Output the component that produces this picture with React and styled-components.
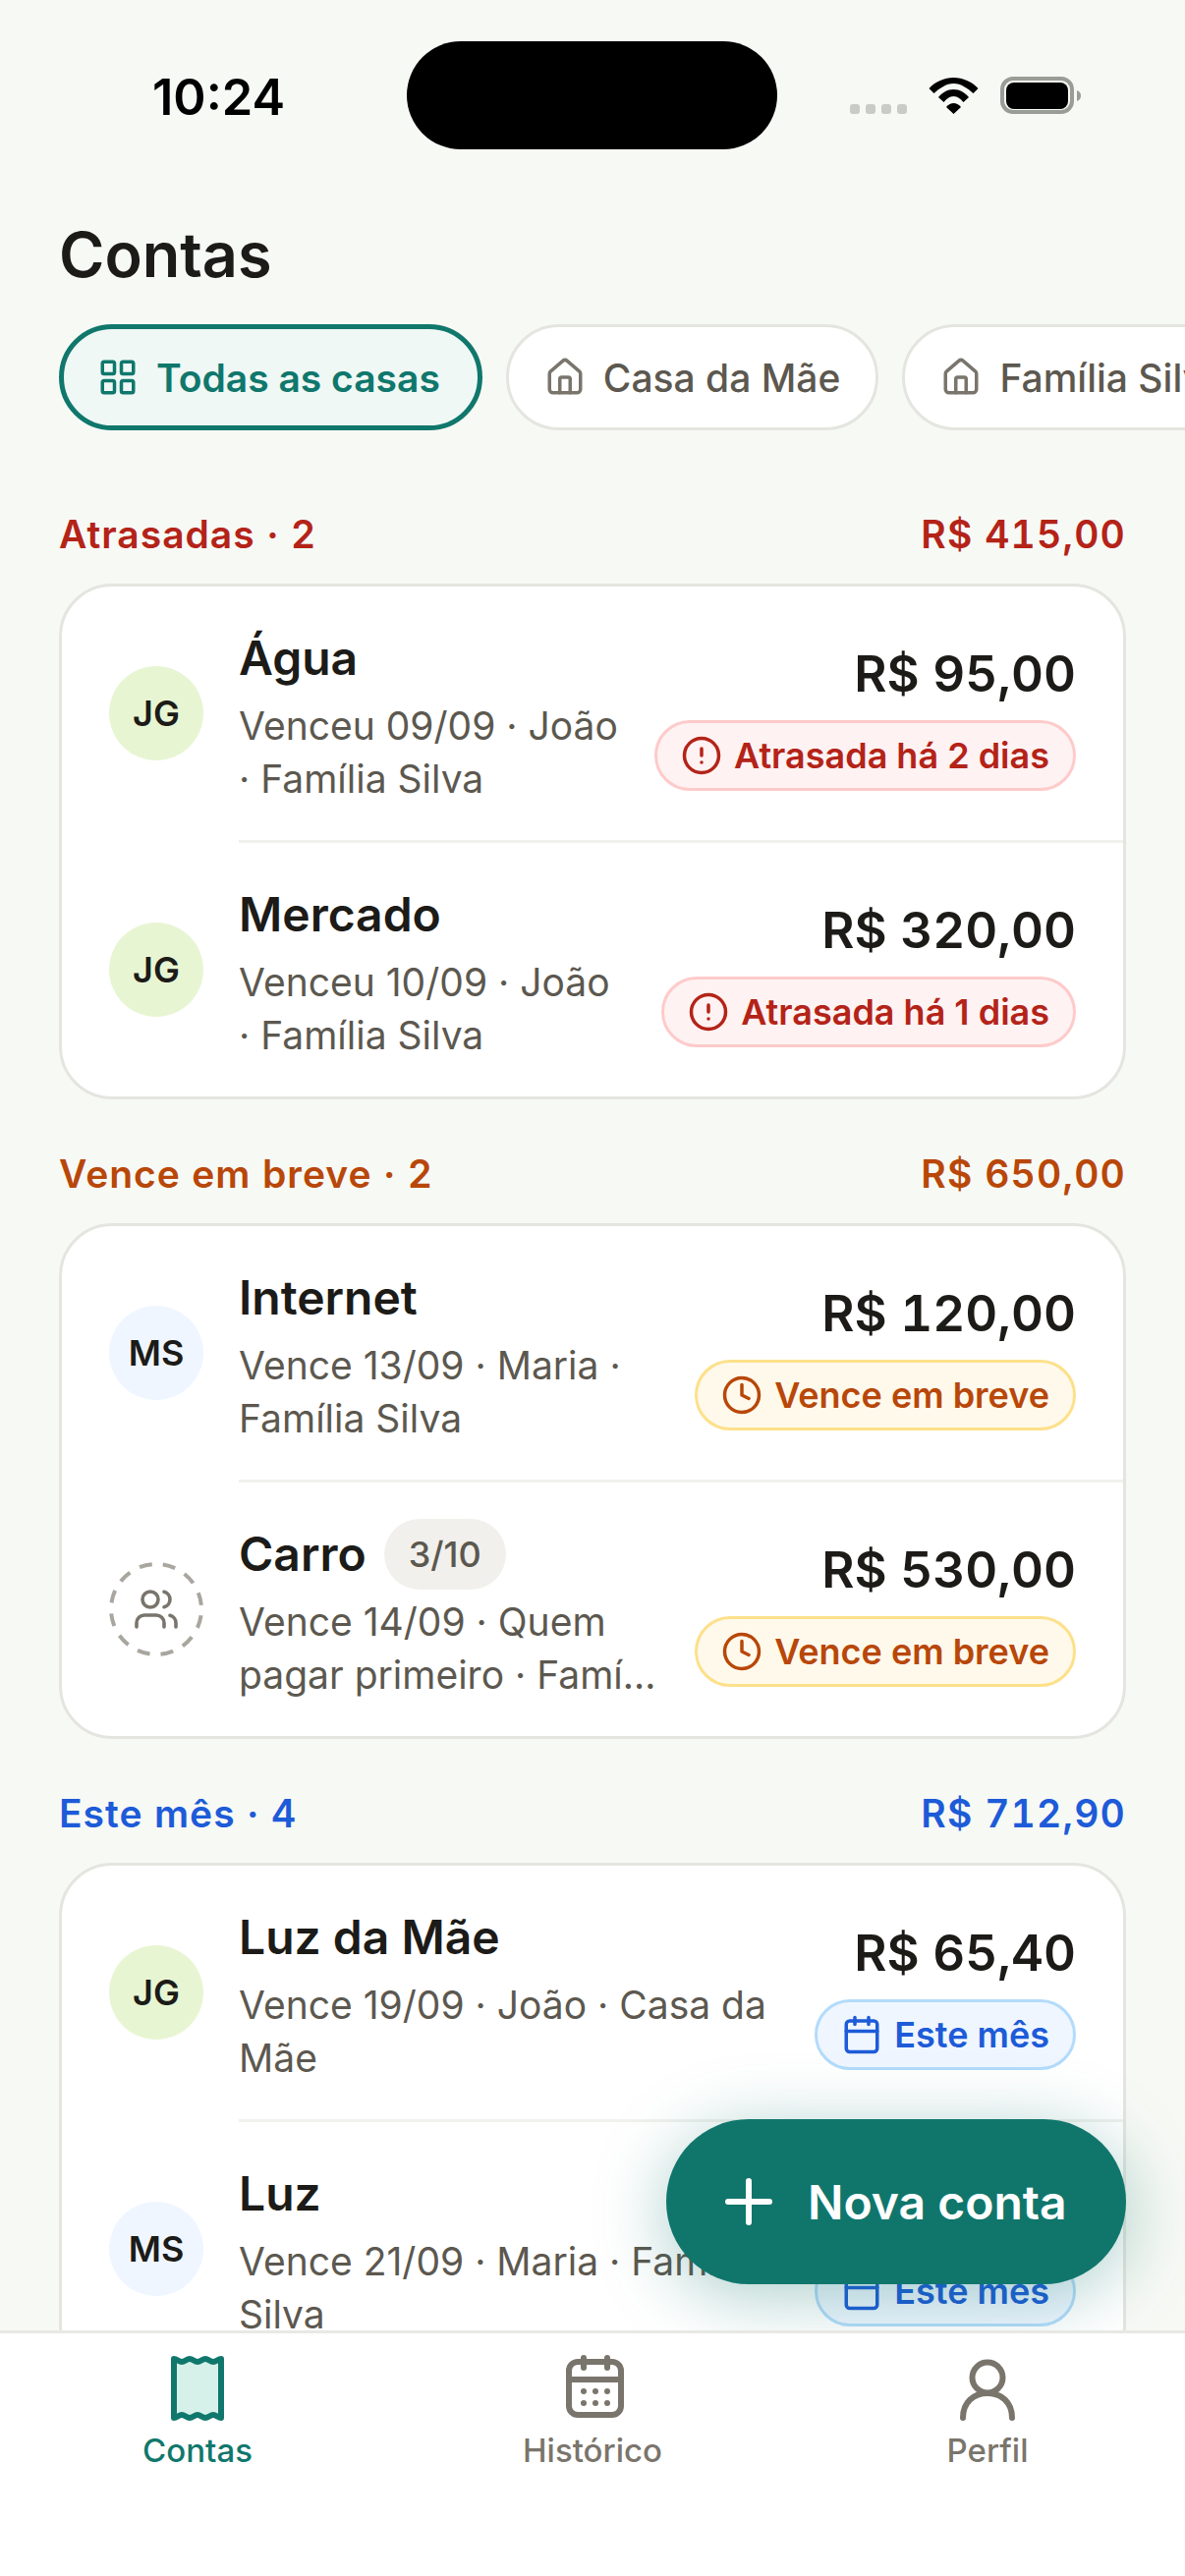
import React from "react";
import styled, { createGlobalStyle } from "styled-components";
import { LayoutGrid, House, CircleAlert, Clock, Calendar, Users, Plus } from "lucide-react";

const GlobalStyle = createGlobalStyle`
  * { box-sizing: border-box; }
  html, body { margin: 0; padding: 0; background: #f7f9f5; }
  body { font-family: "Inter", "Liberation Sans", sans-serif; }
`;

const tones = {
  late: { text: "#b42318", bg: "#fef2f2", border: "#fecaca" },
  soon: { text: "#b84709", bg: "#fff9eb", border: "#fde08a" },
  month: { text: "#1d5bd8", bg: "#eff6ff", border: "#b3dbfb" },
};

const Phone = styled.div`
  position: relative;
  width: 1206px;
  height: 2622px;
  display: flex;
  flex-direction: column;
  overflow: hidden;
  background: #f7f9f5;
`;

const StatusBar = styled.div`
  height: 223px;
  flex: none;
  display: flex;
  align-items: flex-start;
  padding: 42px 0 0 155px;
`;

const Time = styled.div`
  width: 259px;
  padding-top: 27px;
  font-size: 50.5px;
  line-height: 60px;
  font-weight: 600;
  color: #000;
`;

const Island = styled.div`
  width: 377px;
  height: 110px;
  border-radius: 55px;
  background: #000;
`;

const StatusIcons = styled.svg`
  margin-left: 69px;
  margin-top: 28px;
`;

const Title = styled.h1`
  margin: 0;
  padding: 0 60px;
  font-size: 63px;
  line-height: 72px;
  font-weight: 600;
  color: #1c1b18;
`;

const Chips = styled.div`
  display: flex;
  gap: 24px;
  padding: 35px 0 0 60px;
  overflow: hidden;
  flex: none;
`;

const Chip = styled.div`
  flex: none;
  height: 108px;
  display: flex;
  align-items: center;
  gap: 18px;
  padding: ${(p) => (p.$active ? "0 38px 0 34px" : "0 36px")};
  border-radius: 54px;
  border: ${(p) => (p.$active ? "5px solid #10776c" : "3px solid #e5e5e0")};
  background: ${(p) => (p.$active ? "#eff8f5" : "#fff")};
  color: ${(p) => (p.$active ? "#10776c" : "#5c584f")};
  font-size: 39px;
  font-weight: ${(p) => (p.$active ? 600 : 500)};
  white-space: nowrap;

  svg {
    color: ${(p) => (p.$active ? "#10776c" : "#7a756c")};
  }
`;

const List = styled.div`
  flex: 1;
  min-height: 0;
  overflow: hidden;
  padding: 81px 60px 0;
`;

const Section = styled.section`
  margin-bottom: 51px;
`;

const SectionHead = styled.div`
  display: flex;
  justify-content: space-between;
  align-items: center;
  height: 48px;
  margin-bottom: 27px;
  font-size: 39px;
  font-weight: 600;
  letter-spacing: 1px;
  font-variant-numeric: tabular-nums;
  color: ${(p) => tones[p.$tone].text};
`;

const SectionTotal = styled.span`
  letter-spacing: 1.2px;
`;

const Card = styled.div`
  background: #fff;
  border: 3px solid #e5e5e0;
  border-radius: 54px;
  overflow: hidden;
`;

const Row = styled.div`
  position: relative;
  height: 258px;
  display: flex;
  align-items: center;
  padding: 0 48px;
  gap: 36px;
  &:not(:last-child) {
    height: 261px;
    padding-bottom: 3px;
  }
  &:not(:last-child)::after {
    content: "";
    position: absolute;
    left: 180px;
    right: 0;
    bottom: 0;
    height: 3px;
    background: #f1f1ed;
  }
`;

const Avatar = styled.div`
  position: relative;
  flex: none;
  width: 96px;
  height: 96px;
  border-radius: 50%;
  display: flex;
  align-items: center;
  justify-content: center;
  font-size: 36px;
  font-weight: 600;
  color: #1c1b18;
  background: ${(p) => p.$bg || "transparent"};
`;

const Ring = styled.svg`
  position: absolute;
  inset: 0;
`;

const Info = styled.div`
  flex: 1;
  min-width: 0;
  align-self: stretch;
  padding-top: 43px;
`;

const NameLine = styled.div`
  display: flex;
  align-items: center;
  gap: 18px;
  height: 60px;
`;

const Name = styled.div`
  font-size: 48px;
  line-height: 60px;
  font-weight: 600;
  color: #1c1b18;
`;

const Installment = styled.div`
  height: 72px;
  display: flex;
  align-items: center;
  padding: 0 25px;
  border-radius: 36px;
  background: #f1f0ec;
  color: #5c584f;
  font-size: 36px;
  font-weight: 500;
`;

const Meta = styled.div`
  margin-top: 12px;
  font-size: 39px;
  line-height: 54px;
  color: #5c584f;
`;

const MetaClip = styled.div`
  white-space: nowrap;
  overflow: hidden;
  text-overflow: ellipsis;
`;

const Side = styled.div`
  flex: none;
  display: flex;
  flex-direction: column;
  align-items: flex-end;
  gap: 17px;
  padding-top: 8px;
`;

const Amount = styled.div`
  font-size: 51px;
  line-height: 60px;
  font-weight: 600;
  font-variant-numeric: tabular-nums;
  color: #1c1b18;
`;

const Badge = styled.div`
  height: 72px;
  display: flex;
  align-items: center;
  gap: 12px;
  padding: 0 24px;
  border-radius: 36px;
  border: 3px solid ${(p) => tones[p.$tone].border};
  background: ${(p) => tones[p.$tone].bg};
  color: ${(p) => tones[p.$tone].text};
  font-size: 36px;
  font-weight: 600;
  white-space: nowrap;
`;

const Fab = styled.div`
  position: absolute;
  right: 60px;
  bottom: 297px;
  width: 468px;
  height: 168px;
  display: flex;
  align-items: center;
  gap: 24px;
  padding-left: 48px;
  border-radius: 84px;
  background: #10766c;
  color: #fff;
  font-size: 48px;
  font-weight: 600;
  box-shadow: 0 12px 72px rgba(16, 118, 108, 0.35);
`;

const TabBar = styled.nav`
  flex: none;
  height: 250px;
  display: grid;
  grid-template-columns: repeat(3, 1fr);
  padding: 20px 0 0;
  background: #fff;
  border-top: 3px solid #e8e8e4;
  position: relative;
`;

const Tab = styled.div`
  display: flex;
  flex-direction: column;
  align-items: center;
  gap: 6px;
  color: ${(p) => (p.$active ? "#10776c" : "#7a756c")};
  font-size: 33px;
  line-height: 42px;
  font-weight: 500;
`;

const ReceiptIcon = () => (
  <svg width="72" height="72" viewBox="0 0 72 72" fill="none" stroke="#10776c" strokeWidth="6" strokeLinejoin="round">
    <path
      fill="#d6f1e9"
      d="M12 6c3 0 5 3 8 3s5-3 8-3 5 3 8 3 5-3 8-3 5 3 8 3 5-3 8-3V66c-3 0-5-3-8-3s-5 3-8 3-5-3-8-3-5 3-8 3-5-3-8-3-5 3-8 3Z"
    />
  </svg>
);

const CalendarIcon = () => (
  <svg width="72" height="72" viewBox="0 0 72 72" fill="none" stroke="#7a756c" strokeWidth="6" strokeLinecap="round">
    <rect x="12" y="9" width="53" height="54" rx="9" />
    <path d="M27 5v10M51 5v10M12 27h53" />
    <g fill="#7a756c" stroke="none">
      <circle cx="27" cy="39" r="3" />
      <circle cx="39" cy="39" r="3" />
      <circle cx="51" cy="39" r="3" />
      <circle cx="27" cy="51" r="3" />
      <circle cx="39" cy="51" r="3" />
      <circle cx="51" cy="51" r="3" />
    </g>
  </svg>
);

const PersonIcon = () => (
  <svg width="72" height="72" viewBox="0 0 72 72" fill="none" stroke="#7a756c" strokeWidth="6" strokeLinecap="round">
    <circle cx="36" cy="25" r="15.5" />
    <path d="M11 66C11 50 22 41 36 41S61 50 61 66" />
  </svg>
);

const toneIcon = { late: CircleAlert, soon: Clock, month: Calendar };

const sections = [
  {
    tone: "late",
    label: "Atrasadas · 2",
    total: "R$ 415,00",
    rows: [
      { name: "Água", who: "JG", meta: "Venceu 09/09 · João · Família Silva", amount: "R$ 95,00", badge: "Atrasada há 2 dias" },
      { name: "Mercado", who: "JG", meta: "Venceu 10/09 · João · Família Silva", amount: "R$ 320,00", badge: "Atrasada há 1 dias" },
    ],
  },
  {
    tone: "soon",
    label: "Vence em breve · 2",
    total: "R$ 650,00",
    rows: [
      { name: "Internet", who: "MS", meta: "Vence 13/09 · Maria · Família Silva", amount: "R$ 120,00", badge: "Vence em breve" },
      { name: "Carro", extra: "3/10", meta: "Vence 14/09 · Quem", clip: "pagar primeiro · Família Silva", amount: "R$ 530,00", badge: "Vence em breve" },
    ],
  },
  {
    tone: "month",
    label: "Este mês · 4",
    total: "R$ 712,90",
    rows: [
      { name: "Luz da Mãe", who: "JG", meta: "Vence 19/09 · João · Casa da Mãe", amount: "R$ 65,40", badge: "Este mês" },
      { name: "Luz", who: "MS", meta: "Vence 21/09 · Maria · Família Silva", amount: "R$ 65,40", badge: "Este mês" },
    ],
  },
];

const avatarBg = { JG: "#e8f5d3", MS: "#eff6ff" };

export default function App() {
  return (
    <Phone>
      <GlobalStyle />
      <StatusBar>
        <Time>10:24</Time>
        <Island />
        <StatusIcons width="245" height="60" viewBox="0 0 245 60">
          <g fill="#c9cbc6">
            <rect x="5" y="36" width="10" height="10" rx="3" />
            <rect x="21" y="36" width="10" height="10" rx="3" />
            <rect x="37" y="36" width="10" height="10" rx="3" />
            <rect x="53" y="36" width="10" height="10" rx="3" />
          </g>
          <g fill="#000">
            <path d="M85.5 20C92 13 101 9 110.5 9S129 13 135.5 20L130.5 25C125 20 118 15 110.5 15S96 20 90.5 25Z" />
            <path d="M95 29C99 24.5 104 21 110.5 21S122 24.5 126 29L120.5 34C118 31 114.5 28 110.5 28S103 31 100.5 34Z" />
            <path d="M103 39C105 36.5 108 35 110.5 35S116 36.5 118 39L110.5 46Z" />
          </g>
          <rect x="160" y="10" width="71" height="34" rx="11" fill="none" stroke="#9a9c96" strokeWidth="4" />
          <rect x="164" y="14" width="63" height="27" rx="8" fill="#000" />
          <path d="M236 22c3 1 4 3 4 5.5s-1 4.5-4 5.5z" fill="#9a9c96" />
        </StatusIcons>
      </StatusBar>

      <Title>Contas</Title>
      <Chips>
        <Chip $active>
          <LayoutGrid size={42} strokeWidth={2} />
          Todas as casas
        </Chip>
        <Chip>
          <House size={42} strokeWidth={2} />
          Casa da Mãe
        </Chip>
        <Chip>
          <House size={42} strokeWidth={2} />
          Família Silva
        </Chip>
      </Chips>

      <List>
        {sections.map((section) => {
          const BadgeIcon = toneIcon[section.tone];
          return (
            <Section key={section.label}>
              <SectionHead $tone={section.tone}>
                <span>{section.label}</span>
                <SectionTotal>{section.total}</SectionTotal>
              </SectionHead>
              <Card>
                {section.rows.map((row) => (
                  <Row key={row.name}>
                    {row.who ? (
                      <Avatar $bg={avatarBg[row.who]}>{row.who}</Avatar>
                    ) : (
                      <Avatar>
                        <Ring width="96" height="96" viewBox="0 0 96 96">
                          <circle cx="48" cy="48" r="46" fill="none" stroke="#a8a69e" strokeWidth="4" strokeDasharray="13 11.09" strokeDashoffset="17.7" />
                        </Ring>
                        <Users size={48} color="#7a756c" strokeWidth={1.8} />
                      </Avatar>
                    )}
                    <Info>
                      <NameLine>
                        <Name>{row.name}</Name>
                        {row.extra && <Installment>{row.extra}</Installment>}
                      </NameLine>
                      <Meta>
                        {row.meta}
                        {row.clip && <MetaClip>{row.clip}</MetaClip>}
                      </Meta>
                    </Info>
                    <Side>
                      <Amount>{row.amount}</Amount>
                      <Badge $tone={section.tone}>
                        <BadgeIcon size={42} strokeWidth={2} />
                        {row.badge}
                      </Badge>
                    </Side>
                  </Row>
                ))}
              </Card>
            </Section>
          );
        })}
      </List>

      <Fab>
        <Plus size={72} strokeWidth={2} />
        Nova conta
      </Fab>

      <TabBar>
        <Tab $active>
          <ReceiptIcon />
          Contas
        </Tab>
        <Tab>
          <CalendarIcon />
          Histórico
        </Tab>
        <Tab>
          <PersonIcon />
          Perfil
        </Tab>
      </TabBar>
    </Phone>
  );
}
